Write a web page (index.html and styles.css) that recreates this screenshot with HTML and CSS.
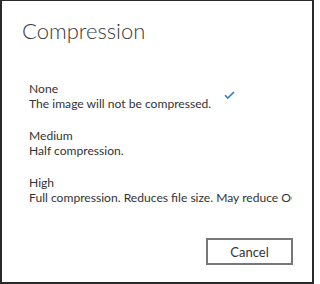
FILE: index.html
```html
<!DOCTYPE html>
<html>
<head>
<meta charset="utf-8">
<link rel="stylesheet" href="styles.css">
</head>
<body>
<div class="dialog">
  <h1 class="title">Compression</h1>
  <div class="options">
    <div class="option">
      <div class="opt-text">
        <div class="opt-name">None</div>
        <div class="opt-desc">The image will not be compressed.</div>
      </div>
      <svg class="check" width="11" height="8" viewBox="0 0 11 8"><path d="M1 4.2 L3.8 7 L10 1" fill="none" stroke="#2b79d0" stroke-width="1.6"/></svg>
    </div>
    <div class="option">
      <div class="opt-text">
        <div class="opt-name">Medium</div>
        <div class="opt-desc">Half compression.</div>
      </div>
    </div>
    <div class="option">
      <div class="opt-text">
        <div class="opt-name">High</div>
        <div class="opt-desc">Full compression. Reduces file size. May reduce OCR quality.</div>
      </div>
    </div>
  </div>
  <div class="actions">
    <button class="btn">Cancel</button>
  </div>
</div>
</body>
</html>
```
FILE: styles.css
```css
html, body { margin: 0; padding: 0; background: #fff; }
.dialog {
  width: 314px; height: 284px; box-sizing: border-box;
  border: 2px solid #2a2a2a; border-top-width: 1px;
  font-family: Lato, "Open Sans", sans-serif;
  color: #333;
  display: flex; flex-direction: column;
}
.title {
  margin: 15px 0 0 20px;
  font-size: 22px; font-weight: 300; line-height: 30px; color: #3a3a3a;
}
.options {
  margin: 35px 20px 0 27px;
  display: flex; flex-direction: column; gap: 17px;
  overflow: hidden;
}
.option { display: flex; align-items: flex-start; }
.opt-text { white-space: nowrap; font-size: 12.1px; line-height: 15px; color: #333; }
.check { margin-left: 13px; margin-top: 10px; flex: none; }
.actions { margin-top: auto; display: flex; justify-content: flex-end; padding: 0 19px 17px 0; }
.btn {
  width: 87px; height: 27px; box-sizing: border-box;
  border: 2px solid #777; background: #fff; color: #333;
  font-family: Lato, "Open Sans", sans-serif; font-size: 13px; padding: 0;
}
```
